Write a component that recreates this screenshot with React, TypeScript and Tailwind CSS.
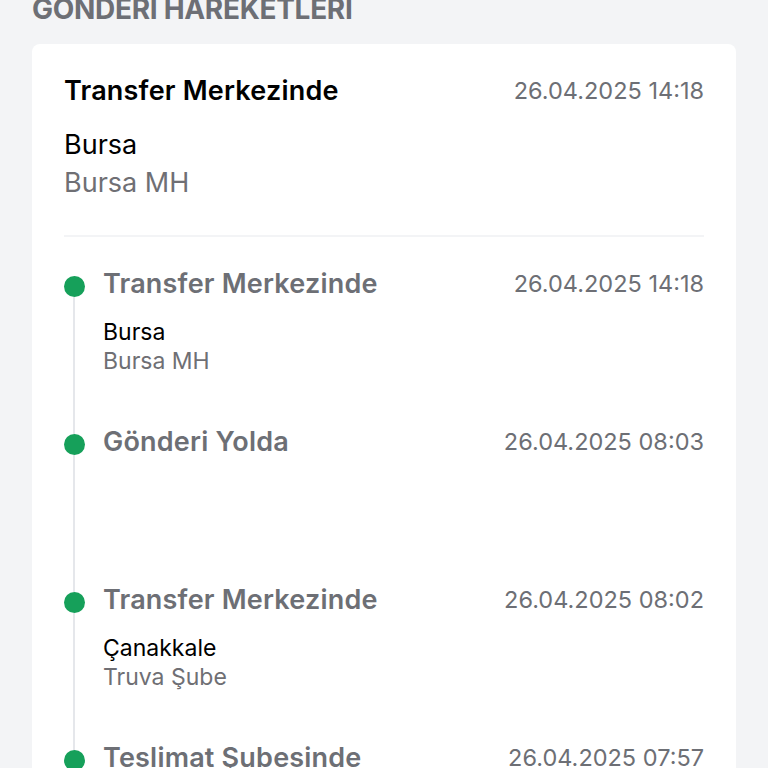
type Movement = {
  title: string
  date: string
  city?: string
  branch?: string
}

const latest: Movement = {
  title: 'Transfer Merkezinde',
  date: '26.04.2025 14:18',
  city: 'Bursa',
  branch: 'Bursa MH',
}

const history: Movement[] = [
  { title: 'Transfer Merkezinde', date: '26.04.2025 14:18', city: 'Bursa', branch: 'Bursa MH' },
  { title: 'Gönderi Yolda', date: '26.04.2025 08:03' },
  { title: 'Transfer Merkezinde', date: '26.04.2025 08:02', city: 'Çanakkale', branch: 'Truva Şube' },
  { title: 'Teslimat Şubesinde', date: '26.04.2025 07:57' },
]

export default function App() {
  return (
    <div
      className="min-h-screen bg-[#f3f4f6] px-8 overflow-hidden"
      style={{ fontFamily: 'Inter, "Noto Sans", sans-serif' }}
    >
      {/* Section title, cut off by the top edge */}
      <h2 className="mt-[-8px] h-[52px] text-[28px] font-bold leading-[34px] tracking-[-0.3px] text-[#6d6f75]">
        GÖNDERİ HAREKETLERİ
      </h2>

      <div className="rounded-lg bg-white px-8 pt-[31px]">
        {/* Latest status */}
        <div className="flex items-start justify-between">
          <div className="text-[27px] font-semibold leading-[32px] tracking-[0.2px] text-black">{latest.title}</div>
          <div className="text-[23.5px] leading-[32px] text-[#6d6f75]">{latest.date}</div>
        </div>
        <div className="mt-[22px] text-[27px] leading-[32px] text-black">{latest.city}</div>
        <div className="mt-[6px] text-[27px] leading-[32px] text-[#6f6f74]">{latest.branch}</div>
        <div className="mt-[36px] h-[2px] bg-[#f3f4f6]" />

        {/* Timeline */}
        <div className="pt-[31px]">
          {history.map((m, i) => (
            <div key={i} className="flex min-h-[158px]">
              <div className="flex w-[20px] flex-col items-center">
                <div className={i === 0 ? 'h-[8px] w-[2px]' : 'h-[8px] w-[2px] bg-[#e5e7eb]'} />
                <div className="h-[21px] w-[21px] shrink-0 rounded-full bg-[#16a05a]" />
                <div className="w-[2px] flex-1 bg-[#e5e7eb]" />
              </div>
              <div className="ml-[19px] flex-1">
                <div className="flex items-start justify-between">
                  <div className="text-[27px] font-semibold leading-[32px] tracking-[0.2px] text-[#6d6f75]">{m.title}</div>
                  <div className="text-[23.5px] leading-[32px] text-[#6d6f75]">{m.date}</div>
                </div>
                {m.city && (
                  <div className="mt-[18px] text-[23px] leading-[29px] text-black">{m.city}</div>
                )}
                {m.branch && (
                  <div className="text-[23px] leading-[29px] text-[#6f6f74]">{m.branch}</div>
                )}
              </div>
            </div>
          ))}
        </div>
      </div>
    </div>
  )
}
